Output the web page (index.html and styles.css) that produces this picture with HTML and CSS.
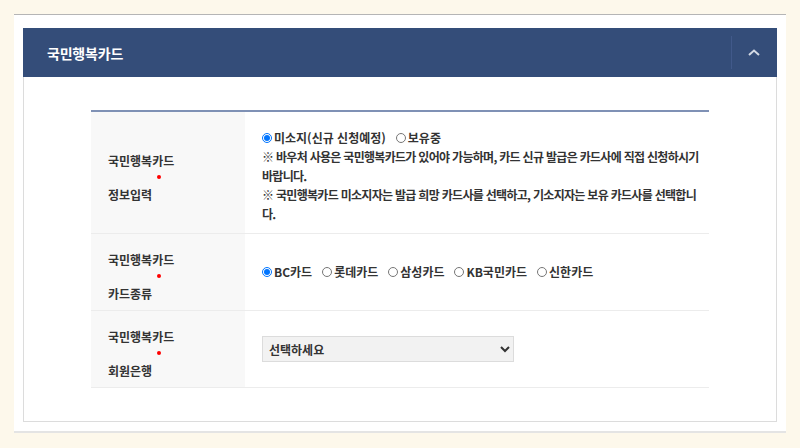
FILE: index.html
```html
<!DOCTYPE html>
<html lang="ko">
<head>
    <meta charset="UTF-8">
    <meta name="viewport" content="width=device-width, initial-scale=1.0">
    <title>국민행복카드</title>
    <link rel="stylesheet" href="styles.css">
</head>
<body>
    <div class="wrap">
        <div class="panel">
            <div class="panel-head">
                <h2 class="panel-title">국민행복카드</h2>
                <button class="toggle" type="button" aria-label="접기">
                    <svg width="12" height="7" viewBox="0 0 12 7"><path d="M1 6 L6 1.5 L11 6" fill="none" stroke="#d3d9e4" stroke-width="2"/></svg>
                </button>
            </div>

            <div class="panel-body">
                <table class="form-table">
                    <tr class="row-info">
                        <th>
                            <span class="label-line">국민행복카드</span>
                            <span class="req"></span>
                            <span class="label-line">정보입력</span>
                        </th>
                        <td>
                            <div class="radios">
                                <label class="radio"><input type="radio" name="own" checked>미소지(신규 신청예정)</label>
                                <label class="radio"><input type="radio" name="own">보유중</label>
                            </div>
                            <p class="note">※ 바우처 사용은 국민행복카드가 있어야 가능하며, 카드 신규 발급은 카드사에 직접 신청하시기 바랍니다.</p>
                            <p class="note">※ 국민행복카드 미소지자는 발급 희망 카드사를 선택하고, 기소지자는 보유 카드사를 선택합니다.</p>
                        </td>
                    </tr>
                    <tr>
                        <th>
                            <span class="label-line">국민행복카드</span>
                            <span class="req"></span>
                            <span class="label-line">카드종류</span>
                        </th>
                        <td>
                            <div class="radios">
                                <label class="radio"><input type="radio" name="kind" checked>BC카드</label>
                                <label class="radio"><input type="radio" name="kind">롯데카드</label>
                                <label class="radio"><input type="radio" name="kind">삼성카드</label>
                                <label class="radio"><input type="radio" name="kind">KB국민카드</label>
                                <label class="radio"><input type="radio" name="kind">신한카드</label>
                            </div>
                        </td>
                    </tr>
                    <tr>
                        <th>
                            <span class="label-line">국민행복카드</span>
                            <span class="req"></span>
                            <span class="label-line">회원은행</span>
                        </th>
                        <td>
                            <select class="select">
                                <option>선택하세요</option>
                            </select>
                        </td>
                    </tr>
                </table>
            </div>
        </div>
    </div>
</body>
</html>
```

FILE: styles.css
```css
body {
    margin: 0;
    padding: 14px 14px 0;
    background: #fdf8eb;
    font-family: "Noto Sans CJK KR", "Noto Sans", sans-serif;
    font-size: 12px;
    color: #333;
}
.wrap {
    background: #fff;
    border-top: 1px solid #b5b5b5;
    border-bottom: 2px solid #e4e4e4;
    padding: 13px 9px 9px;
}
.panel {
    border: 1px solid #dcdcdc;
}
.panel-head {
    display: flex;
    align-items: center;
    justify-content: space-between;
    height: 49px;
    margin: -1px -1px 0;
    padding-left: 24px;
    background: #344d79;
}
.panel-title {
    margin: 0;
    color: #fff;
    font-size: 14px;
    font-weight: 700;
    letter-spacing: -0.2px;
}
.toggle {
    display: flex;
    align-items: center;
    justify-content: center;
    width: 46px;
    height: 33px;
    padding: 0 2px 0 0;
    border: none;
    border-left: 1px solid #41598a;
    background: none;
}
.panel-body {
    padding: 33px 67px 33px;
}
.form-table {
    width: 100%;
    border-collapse: collapse;
    border-top: 2px solid #7f91b5;
}
.form-table tr {
    border-bottom: 1px solid #ececec;
}
.form-table th {
    width: 137px;
    padding: 9px 0 0 17px;
    background: #f8f8f8;
    text-align: left;
    font-weight: 700;
    line-height: 17px;
}
.form-table td {
    height: 76px;
    padding: 0 6px 0 17px;
    font-weight: 700;
}
.form-table .row-info td {
    height: 120px;
    padding: 17px 6px 10px 17px;
    box-sizing: border-box;
    vertical-align: top;
}
.label-line {
    display: block;
}
.req {
    display: block;
    width: 4px;
    height: 4px;
    margin: 6px 0 7px 49px;
    border-radius: 50%;
    background: #f00;
}
.radios {
    display: flex;
    line-height: 18px;
}
.radio {
    display: flex;
    align-items: center;
    margin-right: 10px;
}
.radio input {
    width: 10px;
    height: 10px;
    margin: 0 2px 0 0;
}
.note {
    margin: 0;
    line-height: 19px;
    word-break: break-all;
    letter-spacing: -0.7px;
}
.select {
    width: 252px;
    height: 26px;
    padding: 0 2px;
    border: 1px solid #dcdcdc;
    border-radius: 0;
    background: #f2f2f2;
    color: #333;
    font-family: inherit;
    font-size: 12px;
    font-weight: 700;
}
```
